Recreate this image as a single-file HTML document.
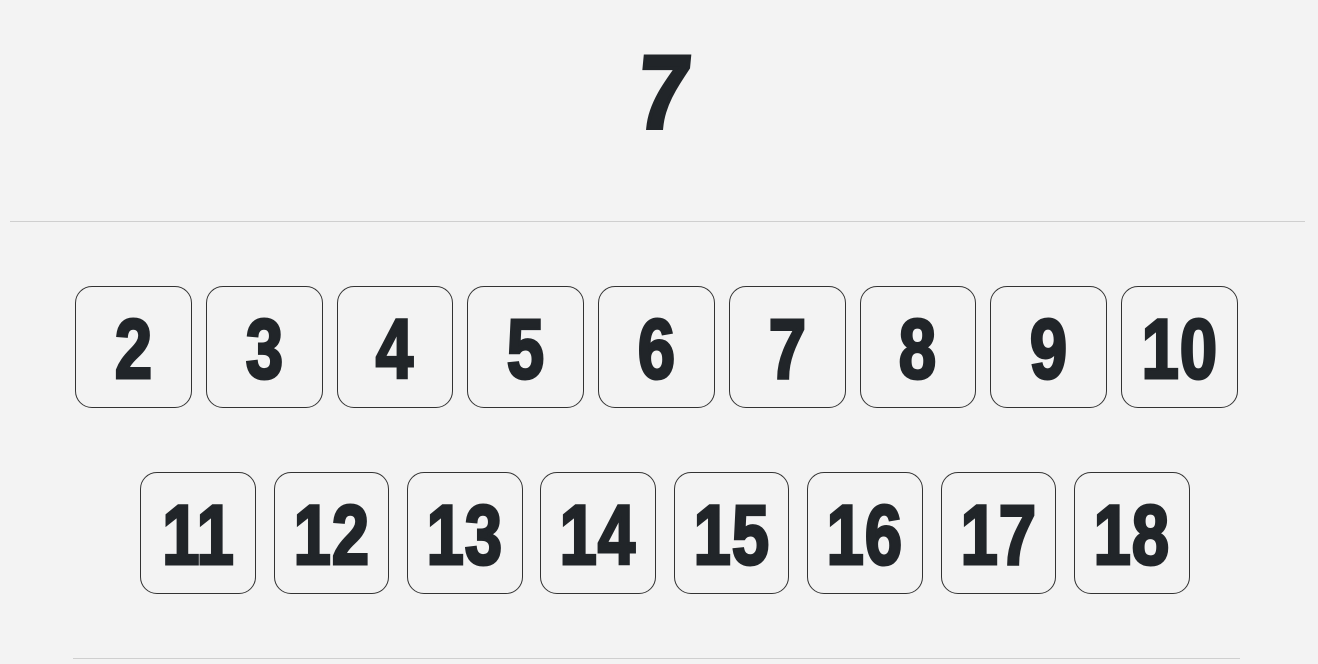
<!DOCTYPE html>
<html><head><style>
body{margin:0;width:1318px;height:664px;background:#f3f3f3;position:relative;overflow:hidden;font-family:"Liberation Sans",sans-serif;color:#212529}
.big{position:absolute;left:0;width:1318px;top:28px;text-align:center;font-weight:bold;font-size:104px;line-height:130px}
.big span{display:inline-block;transform:scaleX(.9) skewX(-6deg);-webkit-text-stroke:4px #212529;margin-left:10px}
.hr{position:absolute;height:1px;background:#cfcfcf}
.b{position:absolute;border:1px solid #333;border-radius:17px;box-sizing:border-box;display:flex;align-items:center;justify-content:center;font-weight:bold;font-size:84px}
.b span{display:inline-block;transform:scaleX(.8);letter-spacing:1px;margin-top:4px;-webkit-text-stroke:3px #212529}
</style></head><body>
<div class="big"><span>7</span></div>
<div class="hr" style="left:10px;top:221px;width:1295px"></div>
<div class="b" style="left:75px;top:286px;width:117px;height:122px"><span>2</span></div>
<div class="b" style="left:206px;top:286px;width:117px;height:122px"><span>3</span></div>
<div class="b" style="left:337px;top:286px;width:116px;height:122px"><span>4</span></div>
<div class="b" style="left:467px;top:286px;width:117px;height:122px"><span>5</span></div>
<div class="b" style="left:598px;top:286px;width:117px;height:122px"><span>6</span></div>
<div class="b" style="left:729px;top:286px;width:117px;height:122px"><span>7</span></div>
<div class="b" style="left:860px;top:286px;width:116px;height:122px"><span>8</span></div>
<div class="b" style="left:990px;top:286px;width:117px;height:122px"><span>9</span></div>
<div class="b" style="left:1121px;top:286px;width:117px;height:122px"><span>10</span></div>
<div class="b" style="left:140px;top:472px;width:116px;height:122px"><span>11</span></div>
<div class="b" style="left:274px;top:472px;width:115px;height:122px"><span>12</span></div>
<div class="b" style="left:407px;top:472px;width:116px;height:122px"><span>13</span></div>
<div class="b" style="left:540px;top:472px;width:116px;height:122px"><span>14</span></div>
<div class="b" style="left:674px;top:472px;width:115px;height:122px"><span>15</span></div>
<div class="b" style="left:807px;top:472px;width:116px;height:122px"><span>16</span></div>
<div class="b" style="left:941px;top:472px;width:115px;height:122px"><span>17</span></div>
<div class="b" style="left:1074px;top:472px;width:116px;height:122px"><span>18</span></div>
<div class="hr" style="left:73px;top:658px;width:1167px"></div>
</body></html>
